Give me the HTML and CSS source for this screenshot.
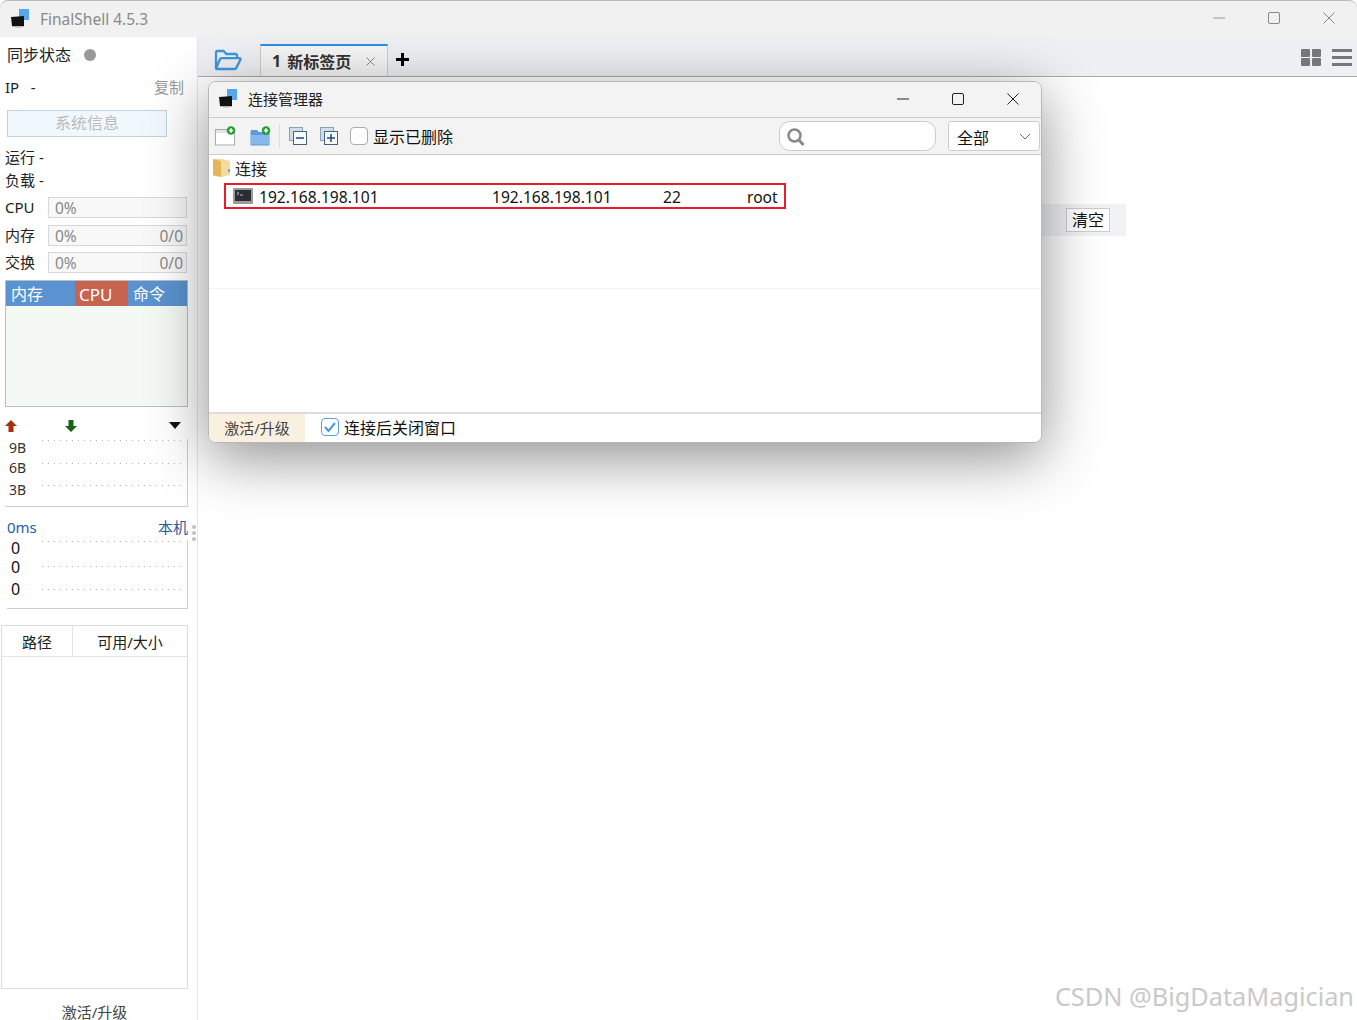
FILE: index.html
```html
<!DOCTYPE html>
<html lang="zh">
<head>
<meta charset="utf-8">
<title>FinalShell 4.5.3</title>
<link rel="stylesheet" href="styles.css">
</head>
<body>
<div class="app">
  <header class="titlebar">
    <svg class="logo" width="20" height="20" viewBox="0 0 20 20"><rect x="9" y="0" width="10" height="11" fill="#58a6ee"/><path d="M1 8l13-1v10H2z" fill="#111"/><rect x="2" y="17" width="12" height="1" fill="#bbb"/><rect x="5" y="18" width="6" height="1" fill="#ccc"/></svg>
    <span class="app-name">FinalShell 4.5.3</span>
    <div class="win-buttons">
      <svg width="14" height="14" viewBox="0 0 14 14"><path d="M1 7h12" stroke="#999" fill="none"/></svg>
      <svg width="14" height="14" viewBox="0 0 14 14"><rect x="1.500" y="1.500" width="11" height="11" rx="1.500" stroke="#888" fill="none"/></svg>
      <svg width="14" height="14" viewBox="0 0 14 14"><path d="M1.500 1.500l11 11M12.500 1.500l-11 11" stroke="#888" fill="none"/></svg>
    </div>
  </header>
  <div class="workspace">
    <aside class="sidebar">
      <div class="sync"><span>同步状态</span><i class="dot"></i></div>
      <div class="ip"><span>IP&nbsp;&nbsp;&nbsp;-</span><span class="copy">复制</span></div>
      <div class="sysinfo">系统信息</div>
      <div class="stat first">运行 -</div>
      <div class="stat">负载 -</div>
      <div class="meter first-meter"><label>CPU</label><div class="bar"><span>0%</span></div></div>
      <div class="meter"><label>内存</label><div class="bar"><span>0%</span><span>0/0</span></div></div>
      <div class="meter"><label>交换</label><div class="bar"><span>0%</span><span>0/0</span></div></div>
      <div class="proc">
        <div class="proc-head"><span class="ph-mem">内存</span><span class="ph-cpu">CPU</span><span class="ph-cmd">命令</span></div>
      </div>
      <div class="arrows">
        <svg width="14" height="14" viewBox="0 0 14 14"><path d="M7 1L1 7h3.500v6h5V7H13z" fill="#a5300f"/></svg>
        <svg class="down" width="14" height="14" viewBox="0 0 14 14"><path d="M7 13L1 7h3.500V1h5v6H13z" fill="#1c6116"/></svg>
        <svg class="caret" width="12" height="7" viewBox="0 0 12 7"><path d="M0 0h12L6 7z" fill="#111"/></svg>
      </div>
      <div class="chart net">
        <div class="row r1"><span>9B</span><i></i></div>
        <div class="row r2"><span>6B</span><i></i></div>
        <div class="row r3"><span>3B</span><i></i></div>
      </div>
      <div class="ping-head"><span>0ms</span><span class="host">本机</span></div>
      <div class="chart ping">
        <div class="row p1"><span>0</span><i></i></div>
        <div class="row p2"><span>0</span><i></i></div>
        <div class="row p3"><span>0</span><i></i></div>
      </div>
      <div class="disk">
        <div class="disk-head"><span class="col-path">路径</span><span class="col-size">可用/大小</span></div>
      </div>
      <div class="activate">激活/升级</div>
      <div class="splitter"><i></i><i></i><i></i></div>
    </aside>
    <main class="main">
      <div class="tabbar">
        <svg class="open" width="28" height="22" viewBox="0 0 28 22"><path d="M2 19V3.500C2 2.500 2.500 2 3.500 2h6l3 3h9c1 0 1.500.5 1.500 1.500V9M2 19.500c.2.500.6.500 1.200.5h17.500c.8 0 1.200-.3 1.500-1L26.500 10.500c.2-.8 0-1.300-1-1.300H7.500c-.8 0-1.200.3-1.500 1z" fill="none" stroke="#3f96dc" stroke-width="2.300"/></svg>
        <div class="tab"><b>1</b><b class="tab-name">新标签页</b>
          <svg class="tab-x" width="9" height="9" viewBox="0 0 9 9"><path d="M.5.500l8 8M8.500.500l-8 8" stroke="#888" fill="none"/></svg>
        </div>
        <svg class="plus" width="13" height="13" viewBox="0 0 13 13"><path d="M5 0h3v5h5v3H8v5H5V8H0V5h5z" fill="#000"/></svg>
        <div class="tab-tools">
          <svg width="20" height="17" viewBox="0 0 20 17"><rect width="9" height="8" rx="1" fill="#777"/><rect x="11" width="9" height="8" rx="1" fill="#777"/><rect y="9" width="9" height="8" rx="1" fill="#777"/><rect x="11" y="9" width="9" height="8" rx="1" fill="#777"/></svg>
          <svg width="20" height="17" viewBox="0 0 20 17"><rect width="20" height="3" fill="#777"/><rect y="7" width="20" height="3" fill="#777"/><rect y="14" width="20" height="3" fill="#777"/></svg>
        </div>
      </div>
      <div class="content">
        <div class="log-bar"><span class="clear">清空</span></div>
      </div>
    </main>
  </div>

  <section class="dialog">
    <div class="dlg-title">
      <svg class="logo" width="20" height="20" viewBox="0 0 20 20"><rect x="9" y="0" width="10" height="11" fill="#58a6ee"/><path d="M1 8l13-1v10H2z" fill="#111"/><rect x="2" y="17" width="12" height="1" fill="#bbb"/><rect x="5" y="18" width="6" height="1" fill="#ccc"/></svg>
      <span>连接管理器</span>
      <div class="win-buttons dlg-win">
        <svg width="14" height="14" viewBox="0 0 14 14"><path d="M1 7h12" stroke="#222" fill="none"/></svg>
        <svg width="14" height="14" viewBox="0 0 14 14"><rect x="1.500" y="1.500" width="11" height="11" rx="1.500" stroke="#222" fill="none"/></svg>
        <svg width="14" height="14" viewBox="0 0 14 14"><path d="M1.500 1.500l11 11M12.500 1.500l-11 11" stroke="#222" fill="none"/></svg>
      </div>
    </div>
    <div class="dlg-tools">
      <svg class="t1" width="21" height="20" viewBox="0 0 21 20"><rect x=".5" y="3.500" width="19" height="15.500" fill="#fff" stroke="#aaa"/><rect x="1" y="4" width="18" height="3" fill="#e4e4e4"/><circle cx="16" cy="4.500" r="4.200" fill="#1d9f2c"/><path d="M13.800 4.500h4.400M16 2.300v4.400" stroke="#fff" stroke-width="1.600"/></svg>
      <svg class="t2" width="21" height="20" viewBox="0 0 21 20"><path d="M.5 5.500c0-1 .5-1.500 1.500-1.500h5l2 2h10.500v12.500c0 .5-.5 1-1 1h-17c-.5 0-1-.5-1-1z" fill="#5f9ad8"/><rect x="1" y="9" width="18" height="9.500" fill="#86b9ea"/><circle cx="16" cy="4.500" r="4.200" fill="#1d9f2c"/><path d="M13.800 4.500h4.400M16 2.300v4.400" stroke="#fff" stroke-width="1.600"/></svg>
      <i class="tool-sep"></i>
      <svg class="t3" width="18" height="18" viewBox="0 0 18 18"><rect x=".5" y=".5" width="13" height="13" fill="#cfdceb" stroke="#8aa0b8"/><rect x="4.500" y="4.500" width="13" height="13" fill="#f6f8fa" stroke="#45627f"/><path d="M7 11h8" stroke="#1d4a78" stroke-width="1.500"/></svg>
      <svg class="t4" width="18" height="18" viewBox="0 0 18 18"><rect x=".5" y=".5" width="13" height="13" fill="#cfdceb" stroke="#8aa0b8"/><rect x="4.500" y="4.500" width="13" height="13" fill="#f6f8fa" stroke="#45627f"/><path d="M7 11h8M11 7v8" stroke="#1d4a78" stroke-width="1.500"/></svg>
      <span class="check"></span>
      <span class="show-del">显示已删除</span>
      <div class="search">
        <svg width="20" height="20" viewBox="0 0 20 20"><circle cx="8.500" cy="8.500" r="6" fill="none" stroke="#8a8a8a" stroke-width="2.500"/><path d="M13 13l4.500 5" stroke="#8a8a8a" stroke-width="3"/></svg>
      </div>
      <div class="select"><span>全部</span><svg width="12" height="7" viewBox="0 0 12 7"><path d="M1 1l5 5 5-5" fill="none" stroke="#666"/></svg></div>
    </div>
    <div class="dlg-body">
      <div class="tree-root">
        <svg width="18" height="20" viewBox="0 0 18 20"><path d="M0 1h9l8 2v14l-8 2-9-1z" fill="#f3dc9c"/><path d="M0 1l8 2v16l-8-2z" fill="#e3b65a"/><rect x="15" y="11" width="2" height="3" fill="#6aa6dc"/></svg>
        <span>连接</span>
      </div>
      <div class="conn">
        <svg class="term" width="20" height="16" viewBox="0 0 20 16"><rect width="20" height="16" rx="1" fill="#9a9a9a"/><rect x="2" y="2" width="16" height="11" fill="#2c2d33"/><path d="M4 4l2 1.500L4 7M7 7h3" stroke="#ddd" fill="none" stroke-width=".8"/></svg>
        <span class="c-name">192.168.198.101</span>
        <span class="c-host">192.168.198.101</span>
        <span class="c-port">22</span>
        <span class="c-user">root</span>
      </div>
      <div class="body-rule"></div>
    </div>
    <div class="dlg-foot">
      <span class="upgrade">激活/升级</span>
      <span class="check on"><svg width="14" height="12" viewBox="0 0 14 12"><path d="M2 6l3.500 4L12 2" fill="none" stroke="#4d94e0" stroke-width="2"/></svg></span>
      <span class="after">连接后关闭窗口</span>
    </div>
  </section>

  <div class="watermark">CSDN @BigDataMagician</div>
</div>
</body>
</html>
```

FILE: styles.css
```css
* { box-sizing: border-box; }
html, body { margin: 0; height: 100%; background: #fff; overflow: hidden; }
body { font-family: "Noto Sans", "Noto Sans CJK SC", sans-serif; font-size: 15px; color: #222; }
.app { position: relative; width: 1357px; height: 1020px; overflow: hidden; display: flex; flex-direction: column; }

.titlebar { height: 37px; flex: none; background: #f1f1f1; border-top: 1px solid #bbb; display: flex; align-items: center; padding-left: 10px; border-radius: 8px 8px 0 0; }
.app-name { margin-left: 10px; color: #8a8a8a; font-size: 15.500px; }
.win-buttons { margin-left: auto; display: flex; gap: 41px; padding: 0 21px 2px 0; }

.workspace { flex: 1; display: flex; min-height: 0; }
.sidebar { position: relative; width: 198px; flex: none; border-right: 1px solid #e6e6e6; background: #fff; line-height: 20px; }
.sync { display: flex; align-items: center; padding: 8px 0 0 7px; height: 28px; font-size: 16px; }
.dot { width: 12px; height: 12px; border-radius: 50%; background: #999; margin-left: 13px; }
.ip { display: flex; justify-content: space-between; padding: 12px 13px 0 5px; height: 43px; }
.copy { color: #999; }
.sysinfo { margin: 2px 0 0 7px; width: 160px; height: 27px; border: 1px solid #c3d3dd; background: #f1f8fd; color: #bbb; text-align: center; line-height: 24px; font-size: 16px; }
.stat { padding-left: 5px; height: 23px; line-height: 23px; }
.stat.first { margin-top: 9px; }
.meter { display: flex; align-items: center; height: 21px; margin-bottom: 6px; padding-left: 5px; }
.first-meter { margin-top: 5px; margin-bottom: 7px; }
.meter label { width: 43px; flex: none; margin-bottom: 1px; }
.bar { width: 139px; height: 21px; border: 1px solid #d8d8d8; background: #f8f8f8; color: #888; display: flex; justify-content: space-between; padding: 0 3px 0 6px; line-height: 20px; font-size: 15.500px; }
.proc { margin: 7px 0 0 5px; width: 183px; height: 127px; border: 1px solid #b4bfc8; background: #f4f9f3; }
.proc-head { display: flex; height: 25px; color: #fff; line-height: 27px; background: #5a93cf; font-size: 16px; }
.proc-head span { padding-left: 5px; }
.ph-mem { width: 69px; }
.ph-cpu { width: 53px; background: #c66450; font-size: 17px; }
.proc-head .ph-cpu { padding-left: 4px; }
.ph-cmd { flex: 1; }
.arrows { position: relative; height: 32px; display: flex; align-items: center; padding: 6px 0 0 4px; }
.down { margin-left: 46px; }
.caret { position: absolute; left: 169px; top: 15px; }
.chart { margin-left: 5px; width: 183px; border-right: 1px solid #c8d0d6; border-bottom: 1px solid #c8d0d6; position: relative; }
.chart.net { height: 68px; font-size: 14px; color: #333; }
.chart .row { position: absolute; left: 4px; right: 4px; height: 20px; line-height: 20px; }
.chart .row i { position: absolute; left: 33px; right: 0; height: 1px; background-image: linear-gradient(90deg, #b4b4b4 1px, transparent 1px); background-size: 6px 1px; }
.r1 { top: -1px; } .r2 { top: 19px; } .r3 { top: 41px; }
.r1 i { top: 2px; }
.r2 i { top: 5px; }
.r3 i { top: 5px; }
.ping-head { display: flex; justify-content: space-between; width: 188px; padding: 10px 0 0 7px; height: 33px; color: #1d5fa6; }
.host { color: #2c5a9c; }
.chart.ping { height: 69px; margin-left: 7px; width: 181px; font-size: 16px; color: #111; }
.chart.ping .row { left: 4px; height: 18px; line-height: 18px; }
.chart.ping .row i { left: 31px; }
.p1 { top: -1px; } .p2 { top: 18px; } .p3 { top: 40px; }
.p1 i { top: 2px; } .p2 i { top: 8px; } .p3 i { top: 9px; }
.disk { margin: 16px 0 0 1px; width: 187px; height: 364px; border: 1px solid #ddd; }
.disk-head { display: flex; height: 31px; border-bottom: 1px solid #e4e4e4; line-height: 32px; text-align: center; }
.col-path { width: 71px; border-right: 1px solid #e4e4e4; }
.col-size { flex: 1; }
.activate { text-align: center; width: 189px; margin-top: 15px; line-height: 16px; color: #444; }
.splitter { position: absolute; left: 192px; top: 488px; display: flex; flex-direction: column; gap: 2px; }
.splitter i { width: 4px; height: 4px; border-radius: 50%; background: #bfbfbf; }

.main { flex: 1; display: flex; flex-direction: column; min-width: 0; }
.tabbar { height: 40px; flex: none; background: #eef0f4; border-bottom: 1px solid #aaa; display: flex; align-items: flex-end; padding-left: 16px; }
.open { margin-bottom: 5px; }
.tab { margin-left: 18px; width: 128px; height: 32px; background: #f5f5f5; border-top: 2px solid #2e8fe6; border-left: 1px solid #ccc; border-right: 1px solid #ccc; display: flex; align-items: center; padding-left: 11px; font-size: 16px; color: #333; }
.tab-name { margin-left: 6px; }
.tab-x { margin-left: 15px; }
.plus { margin: 0 0 10px 8px; }
.tab-tools { margin-left: auto; display: flex; gap: 11px; padding: 0 5px 10px 0; }
.content { flex: 1; position: relative; padding-top: 124px; border-top: 3px solid transparent; }
.log-bar { margin-left: 40px; width: 888px; height: 32px; background: #f0f2f6; display: flex; justify-content: flex-end; align-items: center; padding-right: 16px; }
.clear { width: 44px; height: 24px; border: 1px solid #ccc; background: #fff; font-size: 16px; text-align: center; line-height: 22px; color: #111; }

.dialog { position: absolute; left: 208px; top: 81px; width: 834px; height: 362px; border: 1px solid #b8b8b8; border-radius: 8px; background: #fff; box-shadow: 0 14px 60px rgba(0, 0, 0, .45); display: flex; flex-direction: column; overflow: hidden; }
.dlg-title { height: 36px; flex: none; background: #f3f3f3; display: flex; align-items: center; padding: 0 0 2px 9px; border-bottom: 1px solid #ccc; }
.dlg-title > span { margin-left: 10px; }
.dlg-win { gap: 41px; padding: 0 21px 0 0; }
.dlg-tools { height: 37px; flex: none; background: #f3f3f3; border-bottom: 1px solid #ccc; display: flex; align-items: center; padding-left: 6px; }
.t2 { margin-left: 14px; }
.tool-sep { width: 1px; height: 24px; background: #ddd; margin: 0 9px 0 8px; }
.t4 { margin-left: 13px; }
.check { width: 18px; height: 18px; border: 1px solid #aaa; border-radius: 4px; background: #fff; display: inline-flex; align-items: center; justify-content: center; flex: none; }
.dlg-tools .check { margin-left: 12px; }
.check.on { border-color: #5a9fe4; margin: 0 0 2px 16px; }
.show-del { margin-left: 5px; font-size: 16px; color: #111; }
.search { margin-left: 326px; width: 157px; height: 30px; border: 1px solid #ccc; border-radius: 11px; background: #fff; display: flex; align-items: center; padding: 2px 0 0 6px; }
.select { margin-left: 12px; width: 92px; height: 30px; border: 1px solid #ccc; border-radius: 3px; background: #fff; display: flex; align-items: center; justify-content: space-between; padding: 1px 8px 0; font-size: 16px; color: #111; }
.dlg-body { flex: 1; position: relative; border-bottom: 2px solid #ddd; }
.tree-root { display: flex; align-items: center; height: 28px; padding: 0 0 2px 4px; font-size: 16px; }
.tree-root span { margin-left: 4px; }
.conn { position: relative; margin: 0 0 0 15px; width: 562px; height: 26px; border: 2px solid #e81c2c; display: flex; align-items: center; padding-top: 2px; font-size: 15.600px; color: #111; }
.term { margin: 0 0 2px 7px; }
.c-name { margin-left: 6px; width: 233px; }
.c-host { width: 171px; }
.c-port { width: 84px; }
.body-rule { position: absolute; left: 0; right: 0; top: 133px; border-top: 1px solid #f2f2f2; }
.dlg-foot { height: 28px; flex: none; display: flex; align-items: center; background: #fff; }
.upgrade { width: 96px; height: 100%; background: #faf0e0; text-align: center; line-height: 28px; color: #444; }
.after { margin: 0 0 2px 5px; font-size: 16px; color: #111; }

.watermark { position: absolute; right: 3px; bottom: 7px; font-family: "Noto Sans", sans-serif; font-size: 25.300px; line-height: 34px; color: #c9c9c9; }
```
